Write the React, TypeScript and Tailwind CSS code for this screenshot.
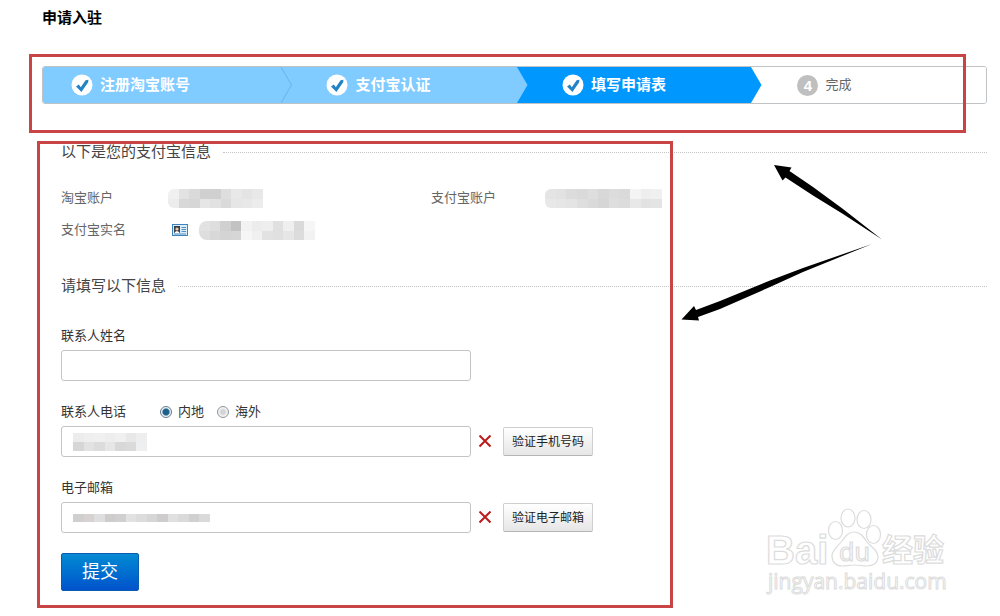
import { useState } from 'react';

const steps = [
  { title: '注册淘宝账号', state: 'done' },
  { title: '支付宝认证', state: 'done' },
  { title: '填写申请表', state: 'current' },
  { title: '完成', state: 'todo' }
];

const stepStyles: Record<string, string> = {
  done: 'bg-[#80cbff] text-white text-[15px] font-bold',
  current: 'bg-[#0098ff] text-white text-[15px] font-bold',
  todo: 'bg-white text-[#666] text-[13px]'
};

const stepFill: Record<string, string> = {
  done: '#80cbff',
  current: '#0098ff',
  todo: '#ffffff'
};

// rows of grey levels, each cell is one block of the mask
const masks = {
  taobao: [
    ['#f0f0f0', '#e2e2e2', '#dadada', '#d0d0d0', '#d0d0d0', '#dedede', '#e8e8e8', '#e4e4e4', '#e8e8e8'],
    ['#ececec', '#d8d8d8', '#d6d6d6', '#e6e6e6', '#e2e2e2', '#dadada', '#e6e6e6', '#e8e8e8', '#ececec']
  ],
  alipay: [
    ['#e4e4e4', '#e2e2e2', '#dcdcdc', '#dadada', '#dedede', '#d8d8d8', '#dcdcdc', '#dadada', '#f4f4f4', '#eeeeee', '#f0f0f0'],
    ['#e8e8e8', '#e6e6e6', '#e4e4e4', '#dedede', '#dadada', '#d6d6d6', '#dedede', '#dcdcdc', '#e8e8e8', '#e2e2e2', '#e4e4e4']
  ],
  realName: [
    ['#e2e2e2', '#dedede', '#d0d0d0', '#c2c2c2', '#f2f2f2', '#ececec', '#eeeeee', '#e0e0e0', '#efefef', '#dadada', '#f6f6f6'],
    ['#dedede', '#d8d8d8', '#d4d4d4', '#d6d6d6', '#f6f6f6', '#f0f0f0', '#e2e2e2', '#e0e0e0', '#e6e6e6', '#dcdcdc', '#f2f2f2']
  ],
  phone: [
    ['#ececec', '#efefef', '#f0f0f0', '#ededed', '#f0f0f0', '#e8e8e8', '#eeeeee'],
    ['#d6d6d6', '#e2e2e2', '#dcdcdc', '#e6e6e6', '#d8d8d8', '#dadada', '#eeeff1']
  ],
  email: [
    ['#cfcfcf', '#d6d2d2', '#dedede', '#d0cccc', '#d0d0d0', '#e2e2e2', '#dcdcdc', '#d6d6d6', '#cecccc', '#e0e0e0', '#dadada', '#d0d0d0', '#dadada']
  ]
};

function Mask({ rows, width, height, className = '' }: { rows: string[][]; width: number; height: number; className?: string }) {
  return (
    <svg
      width={width}
      height={height}
      viewBox={`0 0 ${rows[0].length} ${rows.length}`}
      preserveAspectRatio="none"
      shapeRendering="crispEdges"
      className={className}
      aria-hidden="true"
    >
      {rows.map((row, y) => row.map((fill, x) => <rect key={`${x}-${y}`} x={x} y={y} width="1" height="1" fill={fill} />))}
    </svg>
  );
}

function StepIcon({ state, index }: { state: string; index: number }) {
  if (state === 'todo') {
    return (
      <span className="w-[21px] h-[21px] ml-px rounded-full bg-[#bfbfbf] text-white text-[15px] leading-[21px] font-bold text-center font-['Liberation_Sans',sans-serif]">
        {index + 1}
      </span>
    );
  }
  return (
    <svg width="22" height="22" viewBox="0 0 22 22" aria-hidden="true">
      <circle cx="11" cy="11" r="10.5" fill="#fff" />
      <path d="M5 12.4 7.8 10.6 9.8 13.2 14.6 6.2 17.4 5.8 17.2 8.2 10.4 18Z" fill="#2483c5" />
    </svg>
  );
}

function Steps() {
  return (
    <ol className="grid grid-cols-[239fr_236fr_235fr_235fr] h-[38px] mt-[38px] border border-[#bfc3c6] rounded-[3px] overflow-hidden">
      {steps.map((step, index) => {
        const prev = steps[index - 1];
        return (
          <li key={step.title} className={`flex items-center ${stepStyles[step.state]}`}>
            {prev ? (
              <svg width="11" height="36" viewBox="0 0 11 36" className="mr-[34px]" aria-hidden="true">
                <path d="M0 0 10.5 18 0 36Z" fill={stepFill[prev.state]} />
                {prev.state === step.state && <path d="M0 0 10.5 18 0 36" fill="none" stroke="#62aede" strokeWidth="0.8" />}
              </svg>
            ) : (
              <span className="w-7" />
            )}
            <StepIcon state={step.state} index={index} />
            <span className="ml-[7px]">{step.title}</span>
          </li>
        );
      })}
    </ol>
  );
}

function SectionTitle({ children }: { children: string }) {
  return (
    <h2 className="flex items-center gap-3 h-5 text-[15px] text-[#444]">
      {children}
      <span className="flex-1 border-t border-dotted border-[#c4c4c4]" />
    </h2>
  );
}

function CardIcon() {
  return (
    <svg width="16" height="12" viewBox="0 0 16 12" aria-hidden="true">
      <rect x="0.5" y="0.5" width="15" height="11" fill="#d9ecf8" stroke="#3e83bd" />
      <rect x="2" y="2" width="6" height="7" fill="#3b3f4a" />
      <circle cx="5" cy="5" r="1.6" fill="#f2c9a5" />
      <path d="M2.5 9C3 6.8 7 6.8 7.5 9Z" fill="#fff" />
      <path d="M9.5 3.5H14M9.5 5.5H14M9.5 7.5H14M2 10H14" stroke="#3e83bd" strokeWidth="0.9" />
    </svg>
  );
}

function CrossIcon() {
  return (
    <svg width="12" height="14" viewBox="0 0 12 14" aria-hidden="true">
      <path d="M0.5 0.5 11.5 11.5M11.5 0.5 0.5 11.5" stroke="#bb1c1c" strokeWidth="2" />
    </svg>
  );
}

const inputClass = 'block w-[410px] h-[31px] px-3 border border-[#c4c4c4] rounded-[3px] bg-white text-[13px] outline-none';
const verifyClass =
  'w-[90px] h-[29px] border border-[#cfcfcf] border-b-[#b4b4b4] rounded-[2px] bg-linear-to-b from-white to-[#e6e6e6] text-xs text-[#222]';
const radioClass =
  'appearance-none w-3 h-3 rounded-full border border-[#8f9498] bg-radial from-[#d2d5d8] from-30% to-[#f4f4f4] to-60% checked:border-[#65798a] checked:from-[#1b5f8c] checked:from-40% checked:to-[#eef3f6] checked:to-60%';

function Watermark() {
  return (
    <svg width="190" height="96" viewBox="0 0 190 96" className="absolute left-[762px] top-[504px]" aria-hidden="true">
      <g fill="#fff" stroke="#dcdcdc" strokeWidth="1.2">
        <text x="4" y="60" fontSize="40" fontWeight="700" fontFamily="'Liberation Sans', sans-serif">Bai</text>
        <ellipse cx="73.5" cy="26.5" rx="7" ry="9" />
        <ellipse cx="86" cy="14" rx="7" ry="9" />
        <ellipse cx="102" cy="15.5" rx="7" ry="9" />
        <ellipse cx="111.5" cy="30.5" rx="7" ry="9" />
        <path d="M92 28C98 28 101 32 105 38C109 43 116 46 116 53C116 59 111 62 105 62C100 62 97 61 92 61C87 61 84 62 80 62C74 62 70 58 70 52C70 46 76 42 80 37C83 33 86 28 92 28Z" />
        <text x="77" y="57" fontSize="25" fontFamily="'Noto Sans', sans-serif">du</text>
        <text x="120" y="57" fontSize="31" fontWeight="700" fontFamily="'Noto Sans CJK SC', sans-serif">经验</text>
        <text x="6" y="85" fontSize="21" strokeWidth="1" fontFamily="'Open Sans', sans-serif">jingyan.baidu.com</text>
      </g>
    </svg>
  );
}

export default function App() {
  const [region, setRegion] = useState('mainland');

  return (
    <div className="relative bg-white pt-2 pb-[25px] font-['Liberation_Sans','Noto_Sans_CJK_SC',sans-serif]">
      <main className="pl-[42px] pr-[13px]">
        <h1 className="h-5 text-[15px] leading-5 font-bold text-black">申请入驻</h1>
        <Steps />

        <form className="pl-[19px] mt-[38px] text-[13px] leading-5 text-[#333]" onSubmit={(e) => e.preventDefault()}>
          <SectionTitle>以下是您的支付宝信息</SectionTitle>
          <dl className="grid grid-cols-[107px_263px_114px_1fr] auto-rows-[32px] items-center mt-5 text-[#666]">
            <dt>淘宝账户</dt>
            <dd><Mask rows={masks.taobao} width={95} height={19} className="rounded-l-md" /></dd>
            <dt>支付宝账户</dt>
            <dd><Mask rows={masks.alipay} width={117} height={19} className="rounded-l-md" /></dd>
            <dt>支付宝实名</dt>
            <dd className="flex items-center gap-[11px] pl-1">
              <CardIcon />
              <Mask rows={masks.realName} width={116} height={19} className="rounded-l-lg" />
            </dd>
          </dl>

          <div className="mt-[30px]">
            <SectionTitle>请填写以下信息</SectionTitle>
          </div>

          <div className="mt-[30px]">
            <label htmlFor="name" className="block mb-1">联系人姓名</label>
            <input id="name" type="text" className={inputClass} />
          </div>

          <div className="mt-[21px]">
            <div className="flex items-center mb-1">
              <label htmlFor="phone" className="w-[99px]">联系人电话</label>
              <label className="flex items-center gap-[6px] mr-[13px]">
                <input type="radio" name="region" className={radioClass} checked={region === 'mainland'} onChange={() => setRegion('mainland')} />
                内地
              </label>
              <label className="flex items-center gap-[6px]">
                <input type="radio" name="region" className={radioClass} checked={region === 'overseas'} onChange={() => setRegion('overseas')} />
                海外
              </label>
            </div>
            <div className="relative flex items-center">
              <input id="phone" type="tel" className={inputClass} />
              <Mask rows={masks.phone} width={74} height={18} className="absolute left-3 top-[7px]" />
              <span className="mx-2"><CrossIcon /></span>
              <button type="button" className={`ml-1 ${verifyClass}`}>验证手机号码</button>
            </div>
          </div>

          <div className="mt-[21px]">
            <label htmlFor="email" className="block mb-1">电子邮箱</label>
            <div className="relative flex items-center">
              <input id="email" type="email" className={inputClass} />
              <Mask rows={masks.email} width={137} height={8} className="absolute left-3 top-3" />
              <span className="mx-2"><CrossIcon /></span>
              <button type="button" className={`ml-1 ${verifyClass}`}>验证电子邮箱</button>
            </div>
          </div>

          <button
            type="submit"
            className="mt-5 w-[78px] h-[38px] border border-[#0a5cb0] rounded-[2px] bg-linear-to-b from-[#0a8ad2] to-[#0052cc] text-lg text-white"
          >
            提交
          </button>
        </form>
      </main>

      {/* callouts */}
      <div className="absolute left-[29px] right-[34px] top-[54px] h-[79px] border-3 border-[#c94444] pointer-events-none" />
      <div className="absolute left-[37px] w-[636px] top-[141px] h-[467px] border-3 border-[#c94444] pointer-events-none" />
      <svg width="206" height="162" viewBox="0 0 206 162" className="absolute left-[678px] top-[162px] pointer-events-none" aria-hidden="true">
        <path d="M96 3 113.500 5.500 111.500 9 135 25 165 47 204 77.500 165 52 135 33.500 107.500 15.500 104.500 18.500Z" fill="#000" />
        <path d="M3.500 157.500 16 144 18 148 42 139 92 118.500 125 106 194 82 125 110 92 125 42 147 20 155 21 158.500Z" fill="#000" />
      </svg>
      <Watermark />
    </div>
  );
}
